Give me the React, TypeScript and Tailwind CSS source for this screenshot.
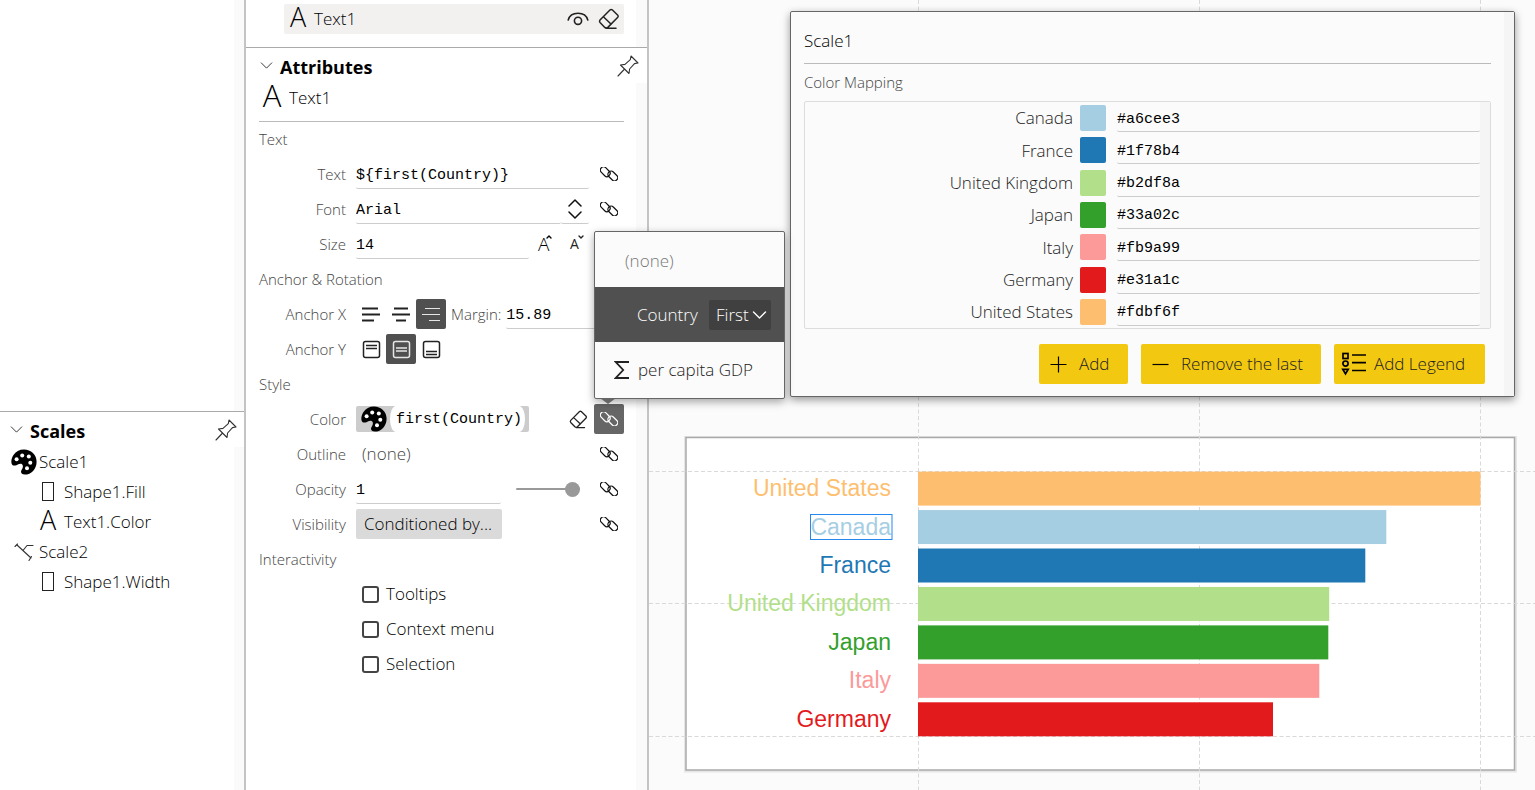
import React, { useId, useState } from "react";

type IconProps = { className?: string };

const mono = "font-['Liberation_Mono',monospace] text-[15px] font-normal text-black";

/* ---------- icons ---------- */

const strokeProps = {
  fill: "none",
  stroke: "currentColor",
  strokeLinecap: "round" as const,
  strokeLinejoin: "round" as const,
};

function LetterIcon({ className = "" }: IconProps) {
  return (
    <span aria-hidden="true" className={`inline-flex justify-center pb-[6px] font-light leading-none text-black ${className}`}>
      A
    </span>
  );
}

function PinIcon() {
  return (
    <svg width="22" height="22" viewBox="0 0 22 22" {...strokeProps} strokeWidth="1.1" className="text-[#333]">
      <path d="M14 1 L21 8 L17.5 8.6 L12.6 14 L12 18.5 L3.5 10 L8 9.4 L13.3 4.6 Z M7.6 14 L1 21" />
    </svg>
  );
}

function ChevronIcon({ className = "", small = false }: IconProps & { small?: boolean }) {
  return (
    <svg width={small ? 13 : 15} height={small ? 7 : 8} viewBox="0 0 14 8" {...strokeProps} strokeWidth={small ? 1.1 : 1.4} className={className}>
      <path d="M1 1 L7 7 L13 1" />
    </svg>
  );
}

function PaletteIcon() {
  return (
    <svg width="26" height="26" viewBox="0 0 26 26" className="shrink-0">
      <path
        fill="#000"
        d="M13 .4C20 .4 25.6 5.4 25.6 12.7C25.6 20 20.3 25.6 13.8 25.6C10.8 25.6 9.5 23.8 10.2 21.8C10.9 19.9 12.2 18.8 11.8 16.6C11.4 14.6 9.2 14.2 7.3 15.3C5.3 16.6 2.3 17.4 1 15.4C-.3 13.2.4 9.5 2.3 6.3C4.8 2.3 8.4.4 13 .4Z"
      />
      <g fill="#fff">
        <circle cx="5.6" cy="10.2" r="2" />
        <circle cx="11.2" cy="6.4" r="2" />
        <circle cx="17.8" cy="7.6" r="2" />
        <circle cx="19.3" cy="13.8" r="2" />
        <circle cx="16" cy="19.2" r="2" />
      </g>
    </svg>
  );
}

function RectIcon() {
  return (
    <svg width="16" height="20" viewBox="0 0 16 20" fill="none" stroke="#222" strokeWidth="1">
      <rect x="2.5" y="0.5" width="11" height="18" />
    </svg>
  );
}

function CurveIcon() {
  return (
    <svg width="20" height="20" viewBox="0 0 20 20" {...strokeProps} strokeWidth="1.1" className="text-[#333]">
      <path d="M1 4.5 L3.5 2 M3 3 L17 16 M17.5 14.5 L15 18.5 M9 8.5 L13 3.5 L19 3.5" />
    </svg>
  );
}

function EraserIcon({ size = 22 }: { size?: number }) {
  return (
    <svg width={size} height={size} viewBox="0 0 22 22" {...strokeProps} strokeWidth="1.5">
      <path d="M12.2 1.8 Q13.2 1 14.2 1.8 L19.8 7.2 Q20.6 8.3 19.8 9.3 L9.8 19.4 Q8.3 20.8 6.8 19.4 L2 14.4 Q1 13.2 2 12 Z M5.4 8.8 L13.2 16.2 M8.3 20.3 L18 20.3" />
    </svg>
  );
}

function EyeIcon() {
  return (
    <svg width="22" height="14" viewBox="0 0 22 14" {...strokeProps} strokeWidth="1.6">
      <path d="M1.2 8 C3.6 -1 18.4 -1 20.8 8" />
      <circle cx="11" cy="8.8" r="3.6" />
    </svg>
  );
}

function LinkIcon() {
  return (
    <svg width="18" height="14" viewBox="0 0 18 14" {...strokeProps} strokeWidth="1.2">
      <rect x="-0.3" y="1.5" width="11" height="6.4" rx="3" transform="rotate(45 5.2 4.7)" />
      <rect x="7.3" y="5.8" width="11" height="6.4" rx="3" transform="rotate(45 12.8 9)" />
    </svg>
  );
}

function AlignXIcon({ mode }: { mode: "left" | "middle" | "right" }) {
  const path = {
    left: "M1 1.5 H17 M1 7.5 H19 M1 13.5 H13",
    middle: "M3 1.5 H17 M1 7.5 H19 M5 13.5 H15",
    right: "M4 1.5 H19 M1 7.5 H19 M8 13.5 H19",
  }[mode];
  return (
    <svg width="20" height="15" viewBox="0 0 20 15" fill="none" stroke="currentColor" strokeWidth={mode === "right" ? 1.2 : 1.8}>
      <path d={path} />
    </svg>
  );
}

function AlignYIcon({ mode }: { mode: "top" | "middle" | "bottom" }) {
  const path = {
    top: "M4 5.5 H15 M4 8.5 H15",
    middle: "M4 8 H15 M4 11 H15",
    bottom: "M4 11.5 H15 M4 14.5 H15",
  }[mode];
  return (
    <svg width="19" height="19" viewBox="0 0 19 19" fill="none" stroke="currentColor" strokeWidth="1.5">
      <rect x="1.5" y="1.5" width="16" height="16" rx="2" />
      <path d={path} strokeWidth="1.4" />
    </svg>
  );
}

function LegendIcon() {
  return (
    <svg width="26" height="24" viewBox="0 0 26 24" fill="none" stroke="#000" strokeWidth="1.7">
      <rect x="2" y="1.5" width="5" height="5" />
      <circle cx="4.5" cy="11.6" r="2.6" />
      <path d="M1.8 17.4 H7.2 L4.5 21.8 Z" />
      <path d="M11 3 H25 M11 10.7 H25 M11 18.5 H25" />
    </svg>
  );
}

/* ---------- panel parts ---------- */

function PanelHeader({ title, className }: { title: string; className: string }) {
  return (
    <header className={`flex h-9 items-center border-t border-[#aaa] bg-white ${className}`}>
      <button type="button" aria-label={`Collapse ${title}`} className="flex w-5">
        <ChevronIcon small className="text-[#333]" />
      </button>
      <h2 className="flex-1 pt-[3px] text-[18px] font-bold text-black">{title}</h2>
      <button type="button" aria-label={`Pin ${title}`}>
        <PinIcon />
      </button>
    </header>
  );
}

function Section({ children }: { children: React.ReactNode }) {
  return <h3 className="flex h-[30px] items-center text-[15px] font-light text-[#444]">{children}</h3>;
}

function Row({ label, htmlFor, children }: { label: string; htmlFor?: string; children: React.ReactNode }) {
  return (
    <div className="flex h-[30px] items-center">
      <label htmlFor={htmlFor} className="mr-[10px] w-[87px] shrink-0 text-right text-[15px] font-light text-[#444]">
        {label}
      </label>
      {children}
    </div>
  );
}

function LinkButton({ label, active = false }: { label: string; active?: boolean }) {
  return (
    <button
      type="button"
      aria-label={`Bind ${label}`}
      className={`flex h-[30px] w-[30px] shrink-0 items-center justify-center rounded-[2px] ${active ? "bg-[#666] text-white" : "text-[#111]"}`}
    >
      <LinkIcon />
    </button>
  );
}

const inputBase = `h-[30px] min-w-0 rounded-[2px] border-b border-[#ccc] bg-transparent pt-1 outline-none ${mono}`;

function ToggleButton({ active = false, label, children }: { active?: boolean; label: string; children: React.ReactNode }) {
  return (
    <button
      type="button"
      aria-label={label}
      aria-pressed={active}
      className={`flex h-[30px] w-[30px] items-center justify-center rounded-[2px] ${active ? "bg-[#505050] text-[#e6e6e6]" : "text-[#222]"}`}
    >
      {children}
    </button>
  );
}

function CheckRow({ label }: { label: string }) {
  const id = useId();
  return (
    <div className="flex h-[30px] items-center gap-[7px] pl-[103px]">
      <input id={id} type="checkbox" className="h-[17px] w-[17px] appearance-none rounded-[3px] border-2 border-[#444] checked:bg-[#444]" />
      <label htmlFor={id} className="text-[17px] font-light text-black">
        {label}
      </label>
    </div>
  );
}

function FieldMenu() {
  return (
    <div className="absolute bottom-[35px] left-0 z-20 w-[191px] rounded-[2px] border border-[#666] bg-[#fbfbfb] shadow-[0_3px_8px_rgba(0,0,0,0.35)]">
      <button type="button" className="flex h-[55px] w-full items-center pl-[30px] pt-[3px] text-[17px] font-light text-[#777]">
        (none)
      </button>
      <div className="flex h-[55px] items-center justify-between bg-[#505050] pl-[42px] pr-[13px] text-[17px] font-light text-white">
        <label htmlFor="aggregation">Country</label>
        <span className="relative">
          <select id="aggregation" className="block h-[30px] w-[62px] appearance-none rounded-[2px] bg-[#404040] pl-[7px] outline-none">
            <option>First</option>
            <option>Last</option>
          </select>
          <ChevronIcon className="pointer-events-none absolute right-1 top-[11px]" />
        </span>
      </div>
      <button type="button" className="flex h-14 w-full items-center gap-2 pl-[19px] text-[17px] font-light text-[#222]">
        <svg width="16" height="18" viewBox="0 0 16 18" fill="none" stroke="#222" strokeWidth="1.8">
          <path d="M15 1 H1.8 L9.2 9 L1.8 17 H15" />
        </svg>
        per capita GDP
      </button>
      <svg width="16" height="6" viewBox="0 0 16 6" className="absolute left-[5px] top-full">
        <path d="M0 0 H16 L8 6 Z" fill="#666" />
      </svg>
    </div>
  );
}

/* ---------- panels ---------- */

function ScaleItem({ icon, name, nested = false }: { icon: React.ReactNode; name: string; nested?: boolean }) {
  return (
    <li>
      <a href="#" className={`flex h-[30px] items-center text-[17px] font-light text-black ${nested ? "gap-2 pl-10" : "gap-[2px] pl-[11px]"}`}>
        {icon}
        {name}
      </a>
    </li>
  );
}

function ScalesPanel() {
  return (
    <aside className="flex w-[246px] shrink-0 flex-col border-r-2 border-[#c4c4c4] bg-white">
      <div className="ml-auto h-[411px] w-[10px] bg-[#fafafa]" />
      <PanelHeader title="Scales" className="pl-[10px] pr-[7px]" />
      <div className="flex flex-1">
        <ul className="flex-1">
          <ScaleItem icon={<PaletteIcon />} name="Scale1" />
          <ScaleItem nested icon={<RectIcon />} name="Shape1.Fill" />
          <ScaleItem nested icon={<LetterIcon className="w-4 text-[27px]" />} name="Text1.Color" />
          <ScaleItem
            icon={
              <span className="flex w-[26px] justify-center">
                <CurveIcon />
              </span>
            }
            name="Scale2"
          />
          <ScaleItem nested icon={<RectIcon />} name="Shape1.Width" />
        </ul>
        <div className="w-[10px] bg-[#fafafa]" />
      </div>
    </aside>
  );
}

function AttributesPanel() {
  const [opacity, setOpacity] = useState("1");
  return (
    <aside className="relative z-10 flex w-[403px] shrink-0 flex-col border-r-2 border-[#c4c4c4] bg-white">
      <div className="flex h-[47px]">
        <div className="flex-1 pl-[38px] pr-3 pt-1">
          <div className="flex h-[30px] items-center rounded-[2px] bg-[#f2f1f0] pl-[6px] pr-1 text-[#222]">
            <LetterIcon className="w-4 text-[27px]" />
            <span className="ml-2 flex-1 text-[17px] font-light text-black">Text1</span>
            <button type="button" aria-label="Toggle visibility" className="mr-[9px]">
              <EyeIcon />
            </button>
            <button type="button" aria-label="Delete Text1">
              <EraserIcon />
            </button>
          </div>
        </div>
        <div className="w-[11px] bg-[#fafafa]" />
      </div>
      <PanelHeader title="Attributes" className="pl-[14px] pr-2" />
      <div className="flex flex-1">
        <div className="flex min-w-0 flex-1 flex-col gap-[2px] pl-[13px] pr-3">
          <div className="flex h-[39px] items-center gap-2 border-b border-[#bbb] pb-2 pl-1">
            <LetterIcon className="w-[18px] text-[31px]" />
            <input
              aria-label="Element name"
              defaultValue="Text1"
              className="min-w-0 flex-1 bg-transparent text-[17px] font-light text-black outline-none"
            />
          </div>

          <div className="flex flex-col gap-[5px]">
            <Section>Text</Section>
            <Row label="Text" htmlFor="text">
              <input id="text" defaultValue="${first(Country)}" className={`${inputBase} mr-[5px] flex-1`} />
              <LinkButton label="text" />
            </Row>
            <Row label="Font" htmlFor="font">
              <input id="font" defaultValue="Arial" className={`${inputBase} flex-1`} />
              <button type="button" aria-label="Choose font" className="mr-[5px] flex h-[30px] w-[28px] items-center justify-center rounded-[2px] border-b border-[#ccc]">
                <svg width="14" height="20" viewBox="0 0 14 20" {...strokeProps} stroke="#111" strokeWidth="1.5">
                  <path d="M1 7 L7 1 L13 7 M1 13 L7 19 L13 13" />
                </svg>
              </button>
              <LinkButton label="font" />
            </Row>
            <Row label="Size" htmlFor="size">
              <input id="size" defaultValue="14" className={`${inputBase} w-[173px]`} />
              <button type="button" aria-label="Increase size" className="ml-[9px] flex w-[30px] items-center text-[19px] font-light leading-none text-black">
                A
                <svg width="6" height="4" viewBox="0 0 6 4" {...strokeProps} strokeWidth="1.4" className="-ml-[3px] mb-[14px]">
                  <path d="M1 3 L3 1 L5 3" />
                </svg>
              </button>
              <button type="button" aria-label="Decrease size" className="flex w-[30px] items-center pl-[2px] text-[14px] leading-none text-[#222]">
                A
                <svg width="6" height="4" viewBox="0 0 6 4" {...strokeProps} strokeWidth="1.4" className="-ml-px mb-[14px]">
                  <path d="M1 1 L3 3 L5 1" />
                </svg>
              </button>
            </Row>

            <Section>Anchor &amp; Rotation</Section>
            <Row label="Anchor X">
              <ToggleButton label="Align left">
                <AlignXIcon mode="left" />
              </ToggleButton>
              <ToggleButton label="Align middle">
                <AlignXIcon mode="middle" />
              </ToggleButton>
              <ToggleButton label="Align right" active>
                <AlignXIcon mode="right" />
              </ToggleButton>
              <label htmlFor="margin" className="mx-[5px] text-[15px] font-light text-[#444]">
                Margin:
              </label>
              <input id="margin" defaultValue="15.89" className={`${inputBase} flex-1`} />
            </Row>
            <Row label="Anchor Y">
              <ToggleButton label="Align top">
                <AlignYIcon mode="top" />
              </ToggleButton>
              <ToggleButton label="Align center" active>
                <AlignYIcon mode="middle" />
              </ToggleButton>
              <ToggleButton label="Align bottom">
                <AlignYIcon mode="bottom" />
              </ToggleButton>
            </Row>

            <Section>Style</Section>
            <Row label="Color">
              <button type="button" className="flex h-[26px] w-[173px] items-center rounded-[2px] bg-[#ccc] pl-[5px] pr-1">
                <PaletteIcon />
                <span className={`ml-[3px] flex h-[26px] flex-1 items-center rounded-[6px/13px] bg-white pl-[6px] pt-[2px] ${mono}`}>first(Country)</span>
              </button>
              <button type="button" aria-label="Clear color" className="ml-auto mr-[6px] text-[#222]">
                <EraserIcon size={19} />
              </button>
              <span className="relative">
                <LinkButton label="color" active />
                <FieldMenu />
              </span>
            </Row>
            <Row label="Outline">
              <button type="button" className="flex-1 pl-[6px] text-left text-[17px] font-light text-[#444]">
                (none)
              </button>
              <LinkButton label="outline" />
            </Row>
            <Row label="Opacity" htmlFor="opacity">
              <input id="opacity" value={opacity} onChange={(e) => setOpacity(e.target.value)} className={`${inputBase} w-[145px]`} />
              <input
                type="range"
                aria-label="Opacity slider"
                min="0"
                max="1"
                step="0.01"
                value={opacity}
                onChange={(e) => setOpacity(e.target.value)}
                className="ml-[15px] mr-auto h-[2px] w-16 appearance-none rounded-full bg-[#999] outline-none [&::-webkit-slider-thumb]:h-[15px] [&::-webkit-slider-thumb]:w-[15px] [&::-webkit-slider-thumb]:appearance-none [&::-webkit-slider-thumb]:rounded-full [&::-webkit-slider-thumb]:bg-[#999]"
              />
              <LinkButton label="opacity" />
            </Row>
            <Row label="Visibility">
              <button type="button" className="mr-auto h-[30px] w-[146px] rounded-[2px] bg-[#dadada] pl-2 text-left text-[17px] font-light text-black">
                Conditioned by...
              </button>
              <LinkButton label="visibility" />
            </Row>

            <Section>Interactivity</Section>
            <CheckRow label="Tooltips" />
            <CheckRow label="Context menu" />
            <CheckRow label="Selection" />
          </div>
        </div>
        <div className="w-[11px] bg-[#fafafa]" />
      </div>
    </aside>
  );
}

/* ---------- scale editor ---------- */

const mapping = [
  ["Canada", "#a6cee3"],
  ["France", "#1f78b4"],
  ["United Kingdom", "#b2df8a"],
  ["Japan", "#33a02c"],
  ["Italy", "#fb9a99"],
  ["Germany", "#e31a1c"],
  ["United States", "#fdbf6f"],
];

function ActionButton({ icon, className, children }: { icon: React.ReactNode; className: string; children: React.ReactNode }) {
  return (
    <button type="button" className={`flex h-10 items-center rounded-[2px] bg-[#f2c811] text-[17px] font-light text-[#222] ${className}`}>
      {icon}
      {children}
    </button>
  );
}

function ScaleEditor() {
  return (
    <section className="absolute left-[141px] right-5 top-[11px] flex rounded-[2px] border border-[#666] bg-[#fbfbfb] shadow-[0_3px_8px_rgba(0,0,0,0.4)]">
      <div className="min-w-0 flex-1 px-[13px] pb-3">
        <h2 className="flex h-[52px] items-center border-b border-[#bbb] pt-[6px] text-[17px] font-light text-black">Scale1</h2>
        <h3 className="flex h-[37px] items-center text-[15px] font-light text-[#444]">Color Mapping</h3>
        <div className="flex h-[228px] rounded-[2px] border border-[#ddd]">
          <ul className="grid min-w-0 flex-1 grid-rows-7">
            {mapping.map(([name, color]) => (
              <li key={name} className="flex items-center">
                <label htmlFor={`map-${name}`} className="mr-[7px] w-[268px] text-right text-[17px] font-light text-[#222]">
                  {name}
                </label>
                <button
                  type="button"
                  aria-label={`Pick color for ${name}`}
                  className="mr-[11px] h-[26px] w-[26px] rounded-[2px]"
                  style={{ backgroundColor: color }}
                />
                <input
                  id={`map-${name}`}
                  defaultValue={color}
                  className="h-7 min-w-0 flex-1 rounded-[2px] border-b border-[#ccc] bg-transparent pt-[3px] font-['Liberation_Mono',monospace] text-[15px] text-black outline-none"
                />
              </li>
            ))}
          </ul>
          <div className="w-[10px] bg-[#f5f5f5]" />
        </div>
        <div className="mt-[15px] flex justify-end gap-[13px] pr-[6px]">
          <ActionButton
            className="w-[89px] gap-3 pl-[11px]"
            icon={
              <svg width="17" height="17" viewBox="0 0 17 17" stroke="#000" strokeWidth="1.2">
                <path d="M.5 8.5 H16.5 M8.5 .5 V16.5" />
              </svg>
            }
          >
            Add
          </ActionButton>
          <ActionButton
            className="w-[180px] gap-3 pl-[11px]"
            icon={
              <svg width="17" height="17" viewBox="0 0 17 17" stroke="#000" strokeWidth="1.2">
                <path d="M.5 8.5 H16.5" />
              </svg>
            }
          >
            Remove the last
          </ActionButton>
          <ActionButton className="w-[151px] gap-[7px] pl-[7px]" icon={<LegendIcon />}>
            Add Legend
          </ActionButton>
        </div>
      </div>
      <div className="w-[10px] bg-[#f5f5f5]" />
    </section>
  );
}

/* ---------- chart ---------- */

const bars = [
  { name: "United States", color: "#fdbf6f", width: 562.5 },
  { name: "Canada", color: "#a6cee3", width: 468.3 },
  { name: "France", color: "#1f78b4", width: 447.3 },
  { name: "United Kingdom", color: "#b2df8a", width: 411.2 },
  { name: "Japan", color: "#33a02c", width: 410.3 },
  { name: "Italy", color: "#fb9a99", width: 401.3 },
  { name: "Germany", color: "#e31a1c", width: 355 },
];

function Chart() {
  return (
    <svg viewBox="649 0 886 790" className="block w-full" role="img" aria-label="Per capita GDP by country">
      <rect x="684" y="436" width="833" height="336.5" fill="#e6e6e6" />
      <rect x="686" y="437.5" width="828.5" height="332.5" fill="#fff" stroke="#aaa" strokeWidth="1.5" />
      <path
        d="M918.5 0V790 M1199.5 0V790 M1480.5 0V790 M649 471.5H1535 M649 603.5H1535 M649 736.5H1535"
        stroke="#d9d9d9"
        strokeDasharray="4 2.5"
      />
      {bars.map((bar, i) => {
        const y = 471.6 + i * 38.45;
        return (
          <g key={bar.name} fill={bar.color}>
            <rect x="918" y={y} width={bar.width} height="34" />
            <text x="891" y={y + 24.5} textAnchor="end" fontSize="23" className="font-['Liberation_Sans',Arial,sans-serif]">
              {bar.name}
            </text>
          </g>
        );
      })}
      <rect x="810.5" y="514.5" width="81.5" height="25" fill="none" stroke="#2488f0" strokeWidth="1" />
    </svg>
  );
}

export default function App() {
  return (
    <div className="flex min-h-screen bg-[#fbfbfb] font-['Open_Sans','Noto_Sans',sans-serif]">
      <ScalesPanel />
      <AttributesPanel />
      <main className="relative min-w-0 flex-1">
        <Chart />
        <ScaleEditor />
      </main>
    </div>
  );
}
